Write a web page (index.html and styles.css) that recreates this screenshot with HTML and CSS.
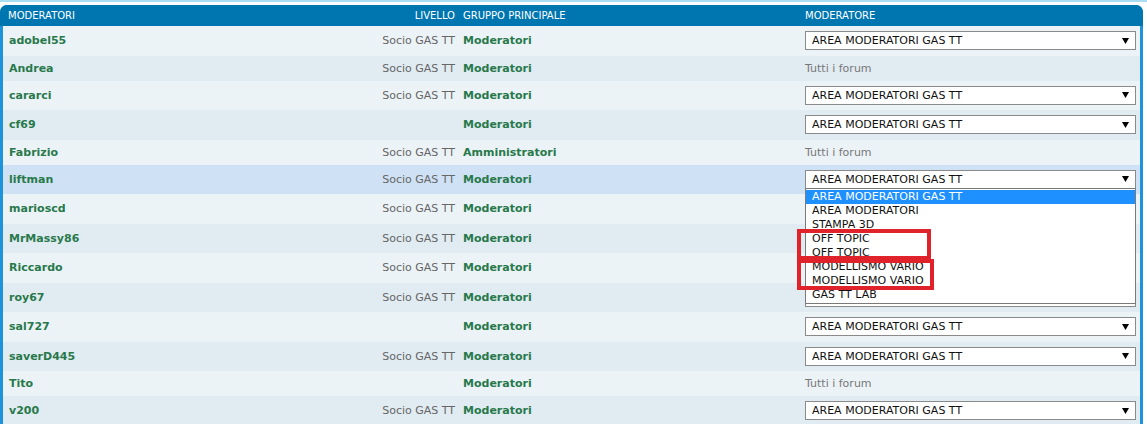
FILE: index.html
```html
<!DOCTYPE html>
<html lang="it">
<head>
<meta charset="utf-8">
<title>Moderatori</title>
<link rel="stylesheet" href="styles.css">
</head>
<body>
<div class="page">
  <div class="strip"></div>
  <div class="panel">
    <div class="head grid">
      <div class="c-name">Moderatori</div>
      <div class="c-level">Livello</div>
      <div class="c-group">Gruppo principale</div>
      <div class="c-mod">Moderatore</div>
    </div>
    <div class="rows">
      <div class="row bg1 grid"><div class="c-name name">adobel55</div><div class="c-level">Socio GAS TT</div><div class="c-group name">Moderatori</div><div class="c-mod"><div class="sel"><span>AREA MODERATORI GAS TT</span><svg class="arr" width="7" height="6" viewBox="0 0 7 6"><path d="M0 0H7L3.5 6Z"/></svg></div></div></div>
      <div class="row bg2 plain grid"><div class="c-name name">Andrea</div><div class="c-level">Socio GAS TT</div><div class="c-group name">Moderatori</div><div class="c-mod all">Tutti i forum</div></div>
      <div class="row bg1 grid"><div class="c-name name">cararci</div><div class="c-level">Socio GAS TT</div><div class="c-group name">Moderatori</div><div class="c-mod"><div class="sel"><span>AREA MODERATORI GAS TT</span><svg class="arr" width="7" height="6" viewBox="0 0 7 6"><path d="M0 0H7L3.5 6Z"/></svg></div></div></div>
      <div class="row bg2 grid"><div class="c-name name">cf69</div><div class="c-level"></div><div class="c-group name">Moderatori</div><div class="c-mod"><div class="sel"><span>AREA MODERATORI GAS TT</span><svg class="arr" width="7" height="6" viewBox="0 0 7 6"><path d="M0 0H7L3.5 6Z"/></svg></div></div></div>
      <div class="row bg1 plain grid"><div class="c-name name">Fabrizio</div><div class="c-level">Socio GAS TT</div><div class="c-group name">Amministratori</div><div class="c-mod all">Tutti i forum</div></div>
      <div class="row hover grid"><div class="c-name name">liftman</div><div class="c-level">Socio GAS TT</div><div class="c-group name">Moderatori</div><div class="c-mod"><div class="sel open"><span>AREA MODERATORI GAS TT</span><svg class="arr" width="7" height="6" viewBox="0 0 7 6"><path d="M0 0H7L3.5 6Z"/></svg>
        <div class="list">
          <div class="opt active">AREA MODERATORI GAS TT</div>
          <div class="opt">AREA MODERATORI</div>
          <div class="opt">STAMPA 3D</div>
          <div class="opt">OFF TOPIC</div>
          <div class="opt">OFF TOPIC</div>
          <div class="opt">MODELLISMO VARIO</div>
          <div class="opt">MODELLISMO VARIO</div>
          <div class="opt">GAS TT LAB</div>
        </div></div></div></div>
      <div class="row bg1 grid"><div class="c-name name">marioscd</div><div class="c-level">Socio GAS TT</div><div class="c-group name">Moderatori</div><div class="c-mod"><div class="sel covered"></div></div></div>
      <div class="row bg2 grid"><div class="c-name name">MrMassy86</div><div class="c-level">Socio GAS TT</div><div class="c-group name">Moderatori</div><div class="c-mod"><div class="sel covered"></div></div></div>
      <div class="row bg1 grid"><div class="c-name name">Riccardo</div><div class="c-level">Socio GAS TT</div><div class="c-group name">Moderatori</div><div class="c-mod"><div class="sel covered"></div></div></div>
      <div class="row bg2 grid"><div class="c-name name">roy67</div><div class="c-level">Socio GAS TT</div><div class="c-group name">Moderatori</div><div class="c-mod"><div class="sel covered"></div></div></div>
      <div class="row bg1 grid"><div class="c-name name">sal727</div><div class="c-level"></div><div class="c-group name">Moderatori</div><div class="c-mod"><div class="sel"><span>AREA MODERATORI GAS TT</span><svg class="arr" width="7" height="6" viewBox="0 0 7 6"><path d="M0 0H7L3.5 6Z"/></svg></div></div></div>
      <div class="row bg2 grid"><div class="c-name name">saverD445</div><div class="c-level">Socio GAS TT</div><div class="c-group name">Moderatori</div><div class="c-mod"><div class="sel"><span>AREA MODERATORI GAS TT</span><svg class="arr" width="7" height="6" viewBox="0 0 7 6"><path d="M0 0H7L3.5 6Z"/></svg></div></div></div>
      <div class="row bg1 plain grid"><div class="c-name name">Tito</div><div class="c-level"></div><div class="c-group name">Moderatori</div><div class="c-mod all">Tutti i forum</div></div>
      <div class="row bg2 grid"><div class="c-name name">v200</div><div class="c-level">Socio GAS TT</div><div class="c-group name">Moderatori</div><div class="c-mod"><div class="sel"><span>AREA MODERATORI GAS TT</span><svg class="arr" width="7" height="6" viewBox="0 0 7 6"><path d="M0 0H7L3.5 6Z"/></svg></div></div></div>
    </div>
  </div>
  <div class="mark mark-1"></div>
  <div class="mark mark-2"></div>
</div>
</body>
</html>
```
FILE: styles.css
```css
html, body {
  margin: 0;
  padding: 0;
  background: #ffffff;
  overflow: hidden;
}
.page {
  position: relative;
  width: 1147px;
  height: 424px;
  overflow: hidden;
  font-family: "DejaVu Sans", Verdana, sans-serif;
  font-size: 11px;
}
.strip {
  height: 2px;
  background: #a9ddf1;
  margin-bottom: 3px;
}
.panel {
  width: 1143px;
  box-sizing: border-box;
  padding: 0 3px;
  background: #1d93db;
  border-radius: 7px 7px 0 0;
}
.grid {
  display: grid;
  grid-template-columns: 300px 156px 346px 1fr;
  align-items: center;
}
.head {
  margin: 0 -3px;
  padding: 0 3px;
  height: 21px;
  background: #0076b1;
  border-radius: 7px 7px 0 0;
  color: #ffffff;
  font-size: 10px;
  text-transform: uppercase;
}
.head .c-name { padding-left: 5px; }
.head .c-level { color: #ffffff; }
.head .c-mod { padding-left: 0; }
.row {
  height: 29.5px;
}
.row.plain {
  height: 25px;
}
.bg1 { background: #ecf3f7; }
.bg2 { background: #e1ebf2; }
.hover { background: #cfe1f4; }
.c-name {
  padding-left: 6px;
}
.c-level {
  text-align: right;
  padding-right: 4px;
  color: #666666;
}
.c-group {
  padding-left: 4px;
}
.c-mod {
  position: relative;
}
.name {
  font-weight: bold;
  color: #28794a;
}
.all {
  color: #777777;
}
.sel {
  position: relative;
  box-sizing: border-box;
  width: 331px;
  height: 19px;
  border: 1px solid #8a8a8a;
  background: #ffffff;
  color: #111111;
  display: flex;
  align-items: center;
  justify-content: space-between;
  padding: 0 6px;
}
.arr {
  display: block;
  fill: #000000;
}
.list {
  position: absolute;
  z-index: 2;
  top: 100%;
  left: -1px;
  width: 331px;
  box-sizing: border-box;
  border: 1px solid #7a7a7a;
  background: #ffffff;
  padding: 1px 0 1px;
}
.opt {
  height: 14px;
  line-height: 14px;
  padding-left: 6px;
  color: #111111;
}
.opt.active {
  background: #1e90ff;
  color: #ffffff;
}
.mark {
  position: absolute;
  z-index: 3;
  box-sizing: border-box;
  border: 4px solid #e0222b;
}
.mark-1 {
  left: 797px;
  top: 229px;
  width: 134px;
  height: 31px;
}
.mark-2 {
  left: 797px;
  top: 259px;
  width: 137px;
  height: 31px;
}
```
